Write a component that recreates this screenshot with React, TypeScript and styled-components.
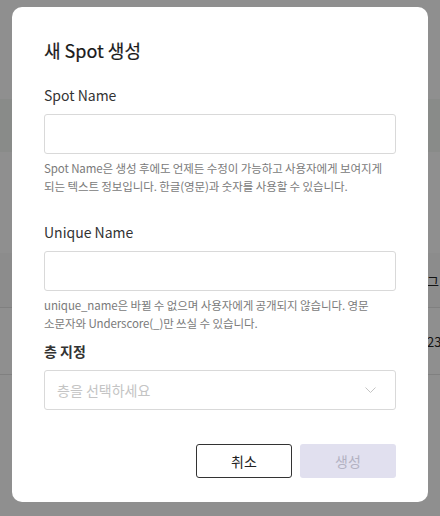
import React from "react";
import styled, { createGlobalStyle } from "styled-components";

const GlobalStyle = createGlobalStyle`
  * {
    box-sizing: border-box;
  }

  body {
    margin: 0;
    font-family: "Noto Sans CJK KR", "Noto Sans", sans-serif;
    color: #222;
    background: #fff;
  }
`;

const Page = styled.div`
  display: flex;
  flex-direction: column;
  height: 516px;
  overflow: hidden;
`;

const PageHeader = styled.div`
  height: 99px;
  background: #fff;
`;

const FilterBar = styled.div`
  height: 53px;
  background: #f5f8f5;
`;

const PageGap = styled.div`
  height: 101px;
`;

const TableRow = styled.div<{ $shaded?: boolean; $height: number }>`
  display: grid;
  grid-template-columns: 427px 1fr;
  align-items: center;
  height: ${({ $height }) => $height}px;
  background: ${({ $shaded }) => ($shaded ? "#f9f9f9" : "#fff")};
  border-bottom: 1px solid #e4e4e4;
  font-size: 13px;
  color: #222;
  white-space: nowrap;
  overflow: hidden;
`;

const Overlay = styled.div`
  position: fixed;
  inset: 0;
  display: flex;
  justify-content: center;
  align-items: flex-start;
  padding-top: 7px;
  background: rgba(0, 0, 0, 0.44);
`;

const Modal = styled.div`
  display: flex;
  flex-direction: column;
  width: 416px;
  padding: 30px 32px 24px;
  background: #fff;
  border-radius: 10px;
`;

const Title = styled.h2`
  margin: 0 0 21px;
  font-size: 18px;
  line-height: 26px;
  font-weight: 400;
  color: #1a1a1a;
  -webkit-text-stroke: 0.2px #1a1a1a;
`;

const Field = styled.div<{ $gap: number }>`
  display: flex;
  flex-direction: column;
  margin-bottom: ${({ $gap }) => $gap}px;
`;

const Label = styled.label<{ $strong?: boolean }>`
  margin-bottom: 8px;
  font-size: 14px;
  line-height: 22px;
  font-weight: ${({ $strong }) => ($strong ? 700 : 400)};
  color: #333;
`;

const TextInput = styled.input`
  height: 40px;
  padding: 0 12px;
  border: 1px solid #d9d9d9;
  border-radius: 3px;
  font-family: inherit;
  font-size: 14px;
  outline: none;
`;

const Help = styled.p`
  margin: 5px 0 0;
  font-size: 11.5px;
  line-height: 18px;
  letter-spacing: -0.1px;
  color: #7a7a7a;
  white-space: nowrap;
`;

const SelectBox = styled.div`
  display: flex;
  align-items: center;
  justify-content: space-between;
  height: 40px;
  padding: 0 19px 0 12px;
  border: 1px solid #d9d9d9;
  border-radius: 3px;
`;

const Placeholder = styled.span`
  font-size: 14px;
  color: #c4c4c4;
`;

const Footer = styled.div`
  display: flex;
  justify-content: flex-end;
  gap: 8px;
  margin-top: 34px;
`;

const Button = styled.button<{ $primary?: boolean }>`
  width: 96px;
  height: 34px;
  border-radius: 3px;
  font-family: inherit;
  font-size: 14px;
  cursor: pointer;
  border: ${({ $primary }) => ($primary ? "none" : "1px solid #333")};
  background: ${({ $primary }) => ($primary ? "#e1e0ef" : "#fff")};
  color: ${({ $primary }) => ($primary ? "#b3b2c2" : "#222")};
`;

const Chevron = () => (
  <svg width="11" height="7" viewBox="0 0 11 7" fill="none">
    <polyline
      points="0.5,0.5 5.5,5.5 10.5,0.5"
      stroke="#c4c4c4"
      strokeWidth="1"
    />
  </svg>
);

export default function App() {
  return (
    <>
      <GlobalStyle />
      <Page>
        <PageHeader />
        <FilterBar />
        <PageGap />
        <TableRow $shaded $height={55}>
          <span />
          <span>그</span>
        </TableRow>
        <TableRow $height={67}>
          <span />
          <span>23</span>
        </TableRow>
      </Page>

      <Overlay>
        <Modal>
          <Title>새 Spot 생성</Title>

          <Field $gap={26}>
            <Label>Spot Name</Label>
            <TextInput />
            <Help>
              Spot Name은 생성 후에도 언제든 수정이 가능하고 사용자에게 보여지게
              <br />
              되는 텍스트 정보입니다. 한글(영문)과 숫자를 사용할 수 있습니다.
            </Help>
          </Field>

          <Field $gap={8}>
            <Label>Unique Name</Label>
            <TextInput />
            <Help>
              unique_name은 바뀔 수 없으며 사용자에게 공개되지 않습니다. 영문
              <br />
              소문자와 Underscore(_)만 쓰실 수 있습니다.
            </Help>
          </Field>

          <Field $gap={0}>
            <Label $strong>층 지정</Label>
            <SelectBox>
              <Placeholder>층을 선택하세요</Placeholder>
              <Chevron />
            </SelectBox>
          </Field>

          <Footer>
            <Button>취소</Button>
            <Button $primary>생성</Button>
          </Footer>
        </Modal>
      </Overlay>
    </>
  );
}
